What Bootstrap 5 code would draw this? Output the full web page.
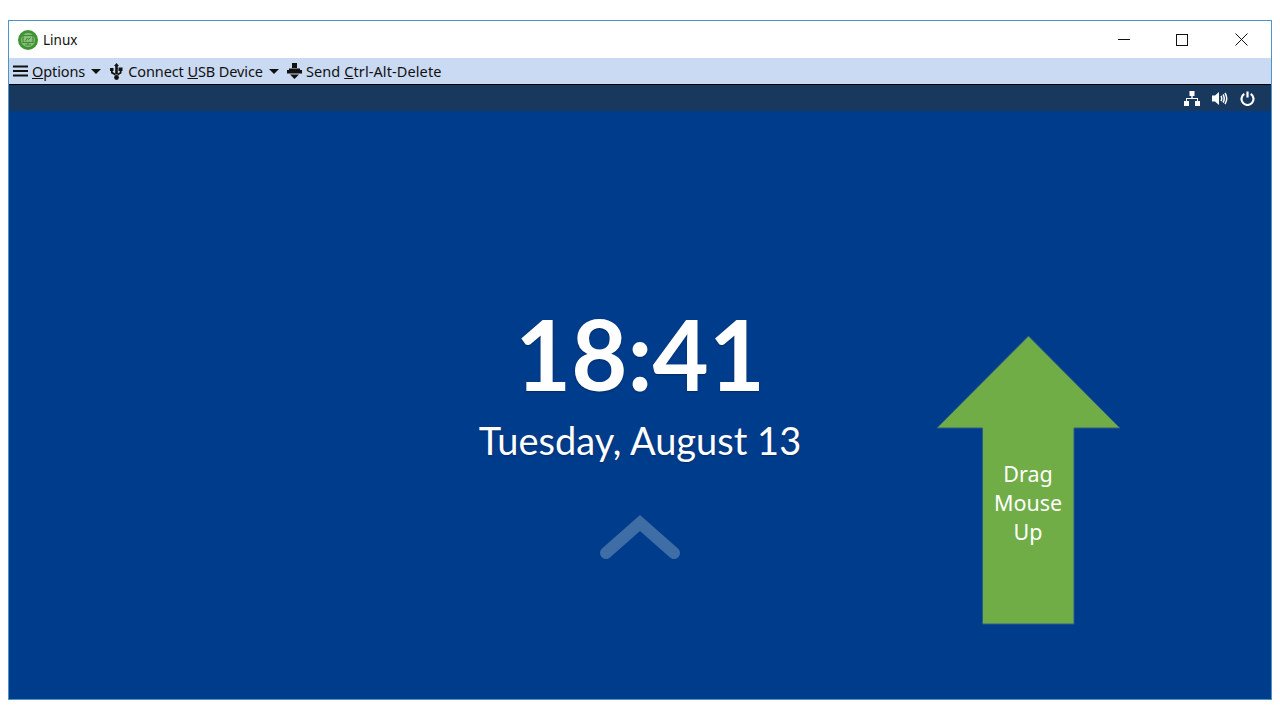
<!DOCTYPE html>
<html lang="en">
<head>
    <meta charset="UTF-8">
    <meta name="viewport" content="width=device-width, initial-scale=1.0">
    <title>Linux</title>
    <link href="https://cdn.jsdelivr.net/npm/bootstrap@5.3.0/dist/css/bootstrap.min.css" rel="stylesheet">
    <style>
        html, body { height: 100%; }
        body { background: #fff; padding: 20px 8px; font-family: "Noto Sans", "Open Sans", sans-serif; overflow: hidden; }
        .vm-window { height: 680px; border: 1px solid #4f94c9; }
        .vm-title { height: 37px; padding-left: 9px; font-size: 13.5px; color: #111; }
        .vm-title span { padding-top: 1px; }
        .vm-logo { margin-right: 5px; }
        .win-btn { width: 58px; height: 37px; }
        .win-btn:last-child { width: 60px; }
        .vm-menu { height: 26px; background: #c9daf2; padding-left: 4px; font-size: 14.5px; color: #111; letter-spacing: -0.1px; }
        .menu-item { margin-right: 8px; }
        .menu-item svg { margin-right: 4px; }
        .menu-label { padding-top: 1px; }
        .menu-item:last-child { letter-spacing: 0.1px; }
        .menu-caret { width: 0; height: 0; margin-left: 6px; border-left: 5px solid transparent; border-right: 5px solid transparent; border-top: 5px solid #111; }
        .gnome-bar { height: 27px; background: #18385e; border-top: 1px solid #000; padding-right: 16px; gap: 12px; }
        .lock-stage { background: #003c8c; color: #fff; position: relative; font-family: Lato, "Noto Sans", sans-serif; }
        .lock-clock { margin-top: 193px; font-size: 97px; line-height: 100px; font-weight: 700; text-shadow: 0 1px 2px rgba(0,0,0,.3); }
        .lock-date { font-size: 38px; line-height: 44px; margin-top: 14px; text-shadow: 0 1px 2px rgba(0,0,0,.3); }
        .lock-chevron { display: block; margin: 53px auto 0; }
        .drag-arrow { position: absolute; left: 927px; top: 224px; }
        .drag-label { position: absolute; left: 973px; top: 348px; width: 92px; font-family: "Noto Sans", sans-serif; font-size: 21.5px; line-height: 29px; }
    </style>
</head>
<body>
    <div class="vm-window d-flex flex-column">
        <div class="vm-title d-flex align-items-center">
            <svg class="vm-logo" width="20" height="20" viewBox="0 0 20 20">
                <circle cx="10" cy="10" r="10" fill="#3f9432"/>
                <circle cx="10" cy="10" r="7" fill="#8cc07f"/>
                <rect x="5" y="5.500" width="10" height="7" fill="none" stroke="#3f8a35" stroke-width="1.200"/>
                <path d="M7 15h6M10 12.500V15M7.500 11l2-3 1 1.500 2-2" fill="none" stroke="#3f8a35"/>
            </svg>
            <span>Linux</span>
            <div class="ms-auto d-flex">
                <div class="win-btn d-flex align-items-center justify-content-center">
                    <svg width="12" height="12"><path d="M0 5.500h12" stroke="#111"/></svg>
                </div>
                <div class="win-btn d-flex align-items-center justify-content-center">
                    <svg width="12" height="12"><rect x=".5" y=".5" width="11" height="11" fill="none" stroke="#111"/></svg>
                </div>
                <div class="win-btn d-flex align-items-center justify-content-center">
                    <svg width="13" height="13"><path d="M.5.5l12 12M12.500.5l-12 12" stroke="#111"/></svg>
                </div>
            </div>
        </div>
        <div class="vm-menu d-flex align-items-center">
            <div class="menu-item d-flex align-items-center">
                <svg width="15" height="12" viewBox="0 0 15 12"><path d="M0 1.500h15M0 6h15M0 10.500h15" stroke="#111" stroke-width="2"/></svg>
                <span class="menu-label"><u>O</u>ptions</span><span class="menu-caret"></span>
            </div>
            <div class="menu-item d-flex align-items-center">
                <svg width="15" height="17" viewBox="0 0 15 17"><path d="M7.500 0l2.500 3H8.800v8.500H6.200V3H5zM1 5h3.500v3H3.700v1l2.500 1.500v2L2 10.200V8H1zM9.500 4.500h4v3.500h-1v2.200L8.800 12.500v-2l2-1.200V8H9.500z" fill="#111"/><circle cx="7.500" cy="14.500" r="2.400" fill="#111"/></svg>
                <span class="menu-label">Connect <u>U</u>SB Device</span><span class="menu-caret"></span>
            </div>
            <div class="menu-item d-flex align-items-center">
                <svg width="15" height="16" viewBox="0 0 15 16"><path d="M5 0h5v5H5zM2 5.500h11V7h2v3.500H0V7h2zM3 11.500h9L7.500 16z" fill="#111"/></svg>
                <span class="menu-label">Send <u>C</u>trl-Alt-Delete</span>
            </div>
        </div>
        <div class="gnome-bar d-flex align-items-center justify-content-end">
            <svg width="16" height="15" viewBox="0 0 16 15"><path d="M5.500 0h5v5H8.700v2H14v3h2v5h-5v-5h2V8H3v2h2v5H0v-5h2V7h5.300V5H5.500z" fill="#fff"/></svg>
            <svg width="16" height="15" viewBox="0 0 16 15"><path d="M0 4.500h3L7 1v13l-4-3.500H0z" fill="#fff"/><path d="M9 5q1.500 2.500 0 5M11 3.500q2.500 4 0 8M13 2q3.500 5.500 0 11" fill="none" stroke="#fff" stroke-width="1.500"/></svg>
            <svg width="15" height="15" viewBox="0 0 15 15"><path d="M4.300 2.900a6 6 0 1 0 6.400 0M7.500 .5v6" fill="none" stroke="#fff" stroke-width="2.200"/></svg>
        </div>
        <div class="lock-stage flex-grow-1 text-center">
            <div class="lock-clock">18:41</div>
            <div class="lock-date">Tuesday, August 13</div>
            <svg class="lock-chevron" width="82" height="46" viewBox="0 0 82 46"><path d="M7 38L41 8l34 30" fill="none" stroke="#3f6ea6" stroke-width="12" stroke-linecap="round" stroke-linejoin="miter"/></svg>
            <svg class="drag-arrow" width="186" height="292" viewBox="0 0 186 292"><path d="M92.500 1l91.500 92h-46v196H46.500V93H.8z" fill="#70ad47" stroke="#2f5a8f"/></svg>
            <div class="drag-label">Drag Mouse Up</div>
        </div>
    </div>
    <script src="https://cdn.jsdelivr.net/npm/bootstrap@5.3.0/dist/js/bootstrap.bundle.min.js"></script>
</body>
</html>
